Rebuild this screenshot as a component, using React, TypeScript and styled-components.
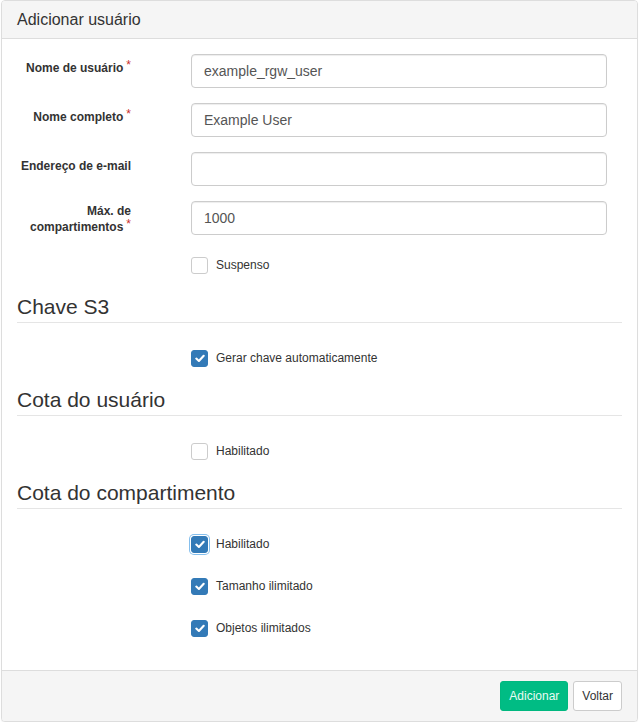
import React from "react";
import styled, { createGlobalStyle } from "styled-components";

const GlobalStyle = createGlobalStyle`
  * { box-sizing: border-box; }
  body {
    margin: 0;
    font-family: "Liberation Sans", Arial, Helvetica, sans-serif;
    font-size: 14px;
    line-height: 1.42857;
    color: #333;
    background: #fff;
  }
`;

const Page = styled.div`
  padding: 0 1px;
`;

const Panel = styled.div`
  width: 637px;
  border: 1px solid #ddd;
  border-radius: 4px;
  background: #fff;
  box-shadow: 0 1px 1px rgba(0, 0, 0, 0.05);
`;

const Header = styled.div`
  background: #f5f5f5;
  border-bottom: 1px solid #ddd;
  border-radius: 3px 3px 0 0;
  padding: 10px 15px;
`;

const Title = styled.h3`
  margin: 0;
  font-size: 16px;
  font-weight: normal;
  line-height: 17px;
  color: #333;
`;

const Body = styled.div`
  padding: 15px;
`;

const FormGroup = styled.div<{ $check?: boolean }>`
  display: grid;
  grid-template-columns: 114px 1fr;
  column-gap: 60px;
  margin-bottom: 15px;
  padding-right: 15px;
  min-height: ${(p) => (p.$check ? "27px" : "34px")};
`;

const Label = styled.label<{ $wrap?: boolean }>`
  text-align: right;
  font-weight: bold;
  font-size: 12px;
  line-height: ${(p) => (p.$wrap ? "16px" : "17px")};
  padding-top: ${(p) => (p.$wrap ? "2px" : "6px")};
  color: #333;
`;

const Req = styled.span`
  color: #c9302c;
  font-weight: normal;
  padding-left: 3px;
  white-space: nowrap;
  vertical-align: 3px;
  line-height: 0;
`;

const Input = styled.input`
  display: block;
  width: 100%;
  height: 34px;
  padding: 6px 12px;
  font-family: inherit;
  font-size: 14px;
  line-height: 1.42857;
  color: #555;
  background: #fff;
  border: 1px solid #ccc;
  border-radius: 4px;
  box-shadow: inset 0 1px 1px rgba(0, 0, 0, 0.075);
  outline: none;
`;

const CheckRow = styled.label`
  grid-column: 2;
  display: flex;
  align-items: flex-start;
  gap: 8px;
  padding-top: 7px;
  font-size: 12px;
  line-height: 16px;
  color: #333;
  cursor: pointer;
`;

const Box = styled.span<{ $checked?: boolean; $focus?: boolean }>`
  flex: none;
  width: 17px;
  height: 17px;
  border-radius: 3px;
  border: 1px solid ${(p) => (p.$checked ? "#337ab7" : "#ccc")};
  background: ${(p) => (p.$checked ? "#337ab7" : "#fff")};
  display: flex;
  align-items: center;
  justify-content: center;
  box-shadow: ${(p) => (p.$focus ? "0 0 0 1px #fff, 0 0 0 2px rgba(102, 175, 233, 0.8)" : "none")};
`;

const Legend = styled.div`
  font-size: 21px;
  line-height: 30px;
  color: #333;
  border-bottom: 1px solid #e5e5e5;
  margin-bottom: 20px;
`;

const Footer = styled.div`
  background: #f5f5f5;
  border-top: 1px solid #ddd;
  border-radius: 0 0 3px 3px;
  padding: 10px 15px;
  display: flex;
  justify-content: flex-end;
  gap: 5px;
`;

const Button = styled.button<{ $primary?: boolean }>`
  font-family: inherit;
  font-size: 12px;
  line-height: 18px;
  padding: 5px 8px;
  border-radius: 3px;
  border: 1px solid ${(p) => (p.$primary ? "#00b87f" : "#ccc")};
  background: ${(p) => (p.$primary ? "#00bc84" : "#fff")};
  color: ${(p) => (p.$primary ? "#e9fbf3" : "#333")};
  cursor: pointer;
`;

const Check = () => (
  <svg width="10" height="9" viewBox="0 0 10 9" aria-hidden="true">
    <path d="M1.3 4.6 L3.9 7 L8.7 1.8" fill="none" stroke="#fff" strokeWidth="2.1" strokeLinecap="round" strokeLinejoin="round" />
  </svg>
);

const Checkbox = ({ label, checked, focus }: { label: string; checked?: boolean; focus?: boolean }) => (
  <FormGroup $check>
    <CheckRow>
      <Box $checked={checked} $focus={focus}>{checked && <Check />}</Box>
      <span>{label}</span>
    </CheckRow>
  </FormGroup>
);

const Field = ({ label, value, required, wrap }: { label: React.ReactNode; value: string; required?: boolean; wrap?: boolean }) => (
  <FormGroup>
    <Label $wrap={wrap}>
      {label}
      {required && <Req>*</Req>}
    </Label>
    <Input defaultValue={value} />
  </FormGroup>
);

export default function App() {
  return (
    <Page>
      <GlobalStyle />
      <Panel>
        <Header>
          <Title>Adicionar usuário</Title>
        </Header>
        <Body>
          <Field label="Nome de usuário" value="example_rgw_user" required />
          <Field label="Nome completo" value="Example User" required />
          <Field label="Endereço de e-mail" value="" />
          <Field label="Máx. de compartimentos" value="1000" required wrap />
          <Checkbox label="Suspenso" />

          <Legend>Chave S3</Legend>
          <Checkbox label="Gerar chave automaticamente" checked />

          <Legend>Cota do usuário</Legend>
          <Checkbox label="Habilitado" />

          <Legend>Cota do compartimento</Legend>
          <Checkbox label="Habilitado" checked focus />
          <Checkbox label="Tamanho ilimitado" checked />
          <Checkbox label="Objetos ilimitados" checked />
        </Body>
        <Footer>
          <Button $primary>Adicionar</Button>
          <Button>Voltar</Button>
        </Footer>
      </Panel>
    </Page>
  );
}
